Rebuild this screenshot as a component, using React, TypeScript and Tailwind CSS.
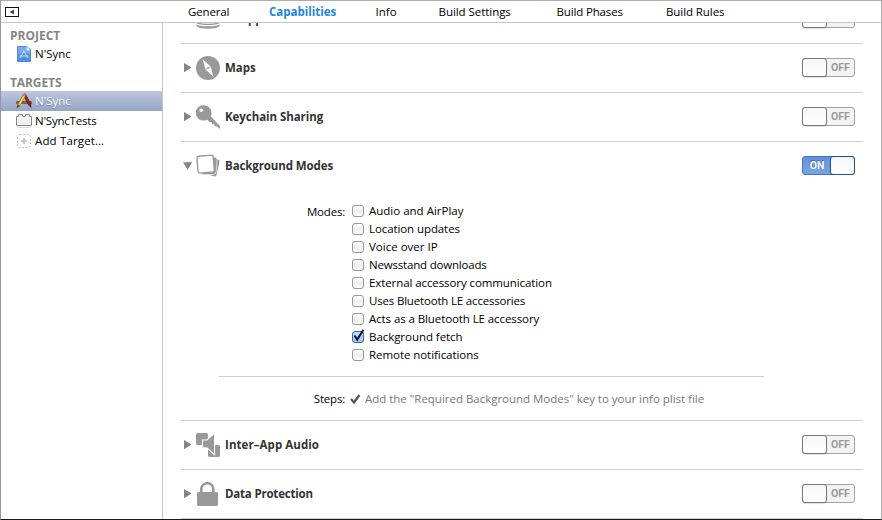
import type { ReactNode } from "react";

const SANS = "font-['Open_Sans','Noto_Sans',sans-serif]";

function OffSwitch() {
  return (
    <div className="flex h-[19px] w-[53px] shrink-0 rounded-[3px] border border-[#a3a3a3] bg-[#f3f3f3]">
      <div className="-my-px -ml-px h-[19px] w-[25px] shrink-0 rounded-[3px] border border-[#777] bg-linear-to-b from-[#f7f7f7] to-white shadow-[0_1px_1px_rgba(0,0,0,0.12)]" />
      <span className="w-[27px] text-center font-['Roboto',sans-serif] text-[10.5px] leading-[18px] font-bold text-[#999]">
        OFF
      </span>
    </div>
  );
}

function OnSwitch() {
  return (
    <div className="flex h-[19px] w-[53px] shrink-0 rounded-[3px] border border-[#3f74cd] bg-linear-to-b from-[#6391dc] to-[#7ba3e2]">
      <span className="w-[27px] pl-px text-center font-['Roboto',sans-serif] text-[10.5px] leading-[18px] font-bold text-white [text-shadow:0_-1px_1px_#3561ae]">
        ON
      </span>
      <div className="-my-px -mr-px h-[19px] w-[25px] shrink-0 rounded-[3px] border border-[#1f4f9f] bg-linear-to-b from-[#f5f5f5] to-white" />
    </div>
  );
}

function Disclosure({ open = false }: { open?: boolean }) {
  return (
    <svg className="h-[10px] w-[10px] shrink-0" viewBox="0 0 10 10" fill="#858585">
      {open ? <path d="M0 1.200H9.200L4.600 8.800z" /> : <path d="M1 0V9.200L8.600 4.600z" />}
    </svg>
  );
}

function DiscsIcon() {
  return (
    <svg className="size-6" viewBox="0 0 24 24" fill="#999">
      <path d="M0.500 14.500V16.200Q3 18 12 18T23.500 16.200V14.500Q21 16.800 12 16.800T0.500 14.500z" />
      <path d="M0.300 17.300Q3 19.300 12 19.300T23.700 17.300V18.500Q22 21.700 12 21.700T0.300 18.500z" />
    </svg>
  );
}

function CompassIcon() {
  return (
    <svg className="size-6" viewBox="0 0 24 24">
      <circle cx="12" cy="12" r="12" fill="#999" />
      <path d="M6.800 3.200L14.600 10.600L17.400 20.800L9.500 13.500z" fill="#fff" />
      <path d="M9.500 13.500L14.600 10.600" stroke="#999" strokeWidth=".7" />
      <circle cx="12" cy="12" r=".9" fill="#999" />
    </svg>
  );
}

function KeyIcon() {
  return (
    <svg className="size-6" viewBox="0 0 24 24">
      <path
        d="M7.800 0.200A7.700 7.700 0 1 0 9.200 15.400L11.600 14.800L13.300 17L15.700 16.900L16.200 19.100L18.300 19.200L18.800 21.200L21 21.600L23.700 24L24 21.200L14.700 11.300A7.700 7.700 0 0 0 7.800 0.200z"
        fill="#999"
      />
      <circle cx="5.300" cy="5.300" r="1.800" fill="#fff" />
    </svg>
  );
}

function PagesIcon() {
  return (
    <svg className="size-6" viewBox="0 0 24 24">
      <path d="M18.500 4.500L22 5.500Q23.800 6 23.500 7.500L20.600 21Q20.200 22.700 18.500 22.300L11 20.500H17z" fill="#999" />
      <path d="M17.500 3L19.500 3.300Q21.200 3.800 21 5.500L20.300 17.500Q20 20.300 17.500 20.400L6 20.700V19z" fill="#999" stroke="#fff" strokeWidth=".6" />
      <path
        d="M2.500 2.300L15.500 1.100Q17 1.100 17.200 2.600L18.300 16.300Q18.300 17.800 16.800 18L4 19.100Q2.300 19.100 2.100 17.500L0.900 4.100Q0.900 2.600 2.500 2.300z"
        fill="#fff"
        stroke="#999"
        strokeWidth="1.400"
      />
    </svg>
  );
}

function AudioIcon() {
  return (
    <svg className="size-6" viewBox="0 0 24 24" fill="#999">
      <rect x="0" y="0" width="12" height="12" rx="1.500" />
      <rect x="12" y="12" width="12" height="12" rx="1.500" />
      <path d="M7 7.500H11L18 1.500V20.500L11 14.200H7z" stroke="#fff" strokeWidth="2.200" paintOrder="stroke" />
    </svg>
  );
}

function LockIcon() {
  return (
    <svg className="size-6" viewBox="0 0 24 24">
      <path d="M5.300 12V6.800A6 5.600 0 0 1 17.300 6.800V12" fill="none" stroke="#999" strokeWidth="2.600" />
      <rect x="1" y="10" width="21" height="14" rx="1.400" fill="#999" />
    </svg>
  );
}

function ProjectIcon() {
  return (
    <svg className="h-4 w-4" viewBox="0 0 16 16">
      <path d="M1.500 0.500H11L14.500 4V15.500H1.500z" fill="#4f90e2" stroke="#3978c9" strokeWidth=".8" />
      <path d="M2 1H10.500L14 4.500V8Q8 6 2 8z" fill="#76abed" />
      <path d="M10.500 0.500V4.300H14.500z" fill="#e8f1fc" />
      <path d="M8.300 4.500L4 12M7.300 4.500L12 12M3.500 10H12.500" stroke="#c5ddf9" strokeWidth="1" fill="none" />
    </svg>
  );
}

function AppIcon() {
  return (
    <svg className="h-4 w-4 overflow-visible" viewBox="0 0 16 16">
      <path d="M0.500 8.500H15.500V10.500H0.500z" fill="#9b602a" stroke="#5e3412" strokeWidth=".5" />
      <path d="M8 1L14 12" stroke="#6e1a1c" strokeWidth="3" />
      <path d="M8.500 1.500L13.500 10.500" stroke="#b3242b" strokeWidth="1.500" />
      <path d="M12.600 12L15.500 15.500L15 11z" fill="#333" />
      <path d="M8.500 2L2.500 12.500" stroke="#6b5620" strokeWidth="3" />
      <path d="M8.300 2.500L3 12" stroke="#f2d94d" strokeWidth="2" />
      <path d="M9 0.800L7.700 3" stroke="#d8786a" strokeWidth="2.600" />
      <path d="M1.500 11.800L0.500 15.500L4 13z" fill="#443" />
    </svg>
  );
}

function BrickIcon() {
  return (
    <svg className="h-4 w-4" viewBox="0 0 16 16">
      <path d="M0.500 3.500H2.500V1.500H6.500V3.500H9.500V1.500H13.500V3.500H15.500V12.500H0.500z" fill="#f3f3f3" stroke="#858585" />
      <path d="M1 14.500H15" stroke="#ddd" />
    </svg>
  );
}

function AddIcon() {
  return (
    <svg className="h-4 w-4" viewBox="0 0 16 16">
      <rect x="1.500" y="1.500" width="13" height="13" rx="2" fill="none" stroke="#c2c2c2" strokeDasharray="2 1.500" />
      <path d="M8 5V11M5 8H11" stroke="#bbb" strokeWidth="1.600" />
    </svg>
  );
}

function SidebarRow({ icon, label, track, selected = false }: { icon: ReactNode; label: string; track: string; selected?: boolean }) {
  return (
    <div
      className={`flex h-5 items-center gap-[3px] pl-[15px] leading-4 whitespace-nowrap ${track} ${
        selected ? "bg-linear-to-b from-[#bcc6de] to-[#97a5c6] text-white [text-shadow:0_1px_1px_#7484a8]" : "text-black"
      }`}
    >
      {icon}
      <span>{label}</span>
    </div>
  );
}

function CapabilityHeader({ icon, title, track, on = false }: { icon: ReactNode; title: string; track: string; on?: boolean }) {
  return (
    <div className="flex h-12 items-center pr-2 pl-[2px]">
      <Disclosure open={on} />
      <div className="ml-[3px] size-6 shrink-0">{icon}</div>
      <h2 className={`ml-[5px] flex-1 leading-4 font-bold whitespace-nowrap text-[#333] ${track}`}>{title}</h2>
      <div className="-mt-px">{on ? <OnSwitch /> : <OffSwitch />}</div>
    </div>
  );
}

const modes = [
  { label: "Audio and AirPlay", track: "tracking-[0px]" },
  { label: "Location updates", track: "tracking-[-0.09px]" },
  { label: "Voice over IP", track: "tracking-[0px]" },
  { label: "Newsstand downloads", track: "tracking-[-0.19px]" },
  { label: "External accessory communication", track: "tracking-[-0.09px]" },
  { label: "Uses Bluetooth LE accessories", track: "tracking-[-0.18px]" },
  { label: "Acts as a Bluetooth LE accessory", track: "tracking-[-0.09px]" },
  { label: "Background fetch", track: "tracking-[-0.05px]", checked: true },
  { label: "Remote notifications", track: "tracking-[-0.06px]" },
];

function ModeOption({ label, track, checked = false }: { label: string; track: string; checked?: boolean }) {
  return (
    <label className="flex h-[18px] items-center leading-4">
      <span
        className={`relative size-3 rounded-[3px] border ${
          checked ? "border-[#4a5f9c] bg-linear-to-b from-[#c6dcf6] to-[#9fcaf5]" : "border-[#989898] bg-linear-to-b from-white via-[#efefef] to-[#fafafa]"
        }`}
      >
        {checked && (
          <svg className="absolute -top-[3px] -left-px h-[14px] w-[14px]" viewBox="0 0 14 14">
            <path d="M2.500 6.500L5.200 10.500L11.500 0.800" fill="none" stroke="#0b1530" strokeWidth="2.100" />
          </svg>
        )}
      </span>
      <span className={`ml-[5px] whitespace-nowrap ${track}`}>{label}</span>
    </label>
  );
}

export default function App() {
  return (
    <div className={`flex h-[520px] w-[882px] flex-col overflow-hidden border border-t-[#adadad] border-r-[#adadad] border-b-[#1c1822] border-l-[#999] bg-white text-[11.5px] text-black ${SANS}`}>
      <header className="flex h-[22px] shrink-0 items-center border-b border-[#c6c6c6] whitespace-nowrap">
        <svg className="ml-1 h-[10px] w-[14px]" viewBox="0 0 14 10">
          <rect x=".5" y=".5" width="13" height="9" fill="#fff" stroke="#111" />
          <path d="M4.500 5L9 2.500V7.500z" fill="#444" />
        </svg>
        <nav className="ml-[169px] flex pt-px">
          <span className="w-[81px] tracking-[-0.15px]">General</span>
          <span className="w-[106.5px] font-bold text-[#1d86df]">Capabilities</span>
          <span className="w-[63px]">Info</span>
          <span className="w-[118px] tracking-[-0.05px]">Build Settings</span>
          <span className="w-[109.5px] tracking-[-0.15px]">Build Phases</span>
          <span className="tracking-[-0.08px]">Build Rules</span>
        </nav>
      </header>
      <div className="flex min-h-0 flex-1">
        <aside className="w-[162px] shrink-0 border-r border-[#c6c6c6]">
          <h3 className="mt-[3px] h-[18px] pt-px pl-[9px] text-[12px] leading-[18px] font-bold text-[#858585]">PROJECT</h3>
          <SidebarRow icon={<ProjectIcon />} label="N'Sync" track="tracking-[0px]" />
          <h3 className="mt-[9px] h-[18px] pt-px pl-[9px] text-[12px] leading-[18px] font-bold tracking-[-0.1px] text-[#858585]">TARGETS</h3>
          <SidebarRow icon={<AppIcon />} label="N'Sync" track="tracking-[0px]" selected />
          <SidebarRow icon={<BrickIcon />} label="N'SyncTests" track="tracking-[-0.2px]" />
          <SidebarRow icon={<AddIcon />} label="Add Target…" track="tracking-[0.15px]" />
        </aside>
        <main className="min-w-0 flex-1 overflow-hidden pr-[18px] pl-[18px]">
          <div className="-mt-7 *:border-b *:border-[#cfcfcf]">
            <section>
              <CapabilityHeader icon={<DiscsIcon />} title="In-App Purchase" track="tracking-[0px]" />
            </section>
            <section>
              <CapabilityHeader icon={<CompassIcon />} title="Maps" track="tracking-[0px]" />
            </section>
            <section>
              <CapabilityHeader icon={<KeyIcon />} title="Keychain Sharing" track="tracking-[-0.06px]" />
            </section>
            <section className="h-[279px]">
              <CapabilityHeader icon={<PagesIcon />} title="Background Modes" track="tracking-[-0.1px]" on />
              <div className="mr-[99px] ml-[38px] flex h-[187px] gap-[7px] border-b border-[#cfcfcf] pt-3">
                <span className="w-[126px] text-right leading-5 tracking-[-0.2px]">Modes:</span>
                <div>
                  {modes.map((m) => (
                    <ModeOption key={m.label} {...m} />
                  ))}
                </div>
              </div>
              <div className="ml-[38px] flex h-[44px] items-center leading-4">
                <span className="w-[126px] text-right tracking-[-0.2px]">Steps:</span>
                <svg className="ml-[5px] h-[10px] w-[11px]" viewBox="0 0 11 10">
                  <path d="M1 5L4 8.500L9.500 1" fill="none" stroke="#555" strokeWidth="2.200" />
                </svg>
                <span className="ml-1 tracking-[-0.02px] whitespace-nowrap text-[#777]">Add the "Required Background Modes" key to your info plist file</span>
              </div>
            </section>
            <section>
              <CapabilityHeader icon={<AudioIcon />} title="Inter–App Audio" track="tracking-[0.07px]" />
            </section>
            <section>
              <CapabilityHeader icon={<LockIcon />} title="Data Protection" track="tracking-[-0.2px]" />
            </section>
          </div>
        </main>
      </div>
    </div>
  );
}
